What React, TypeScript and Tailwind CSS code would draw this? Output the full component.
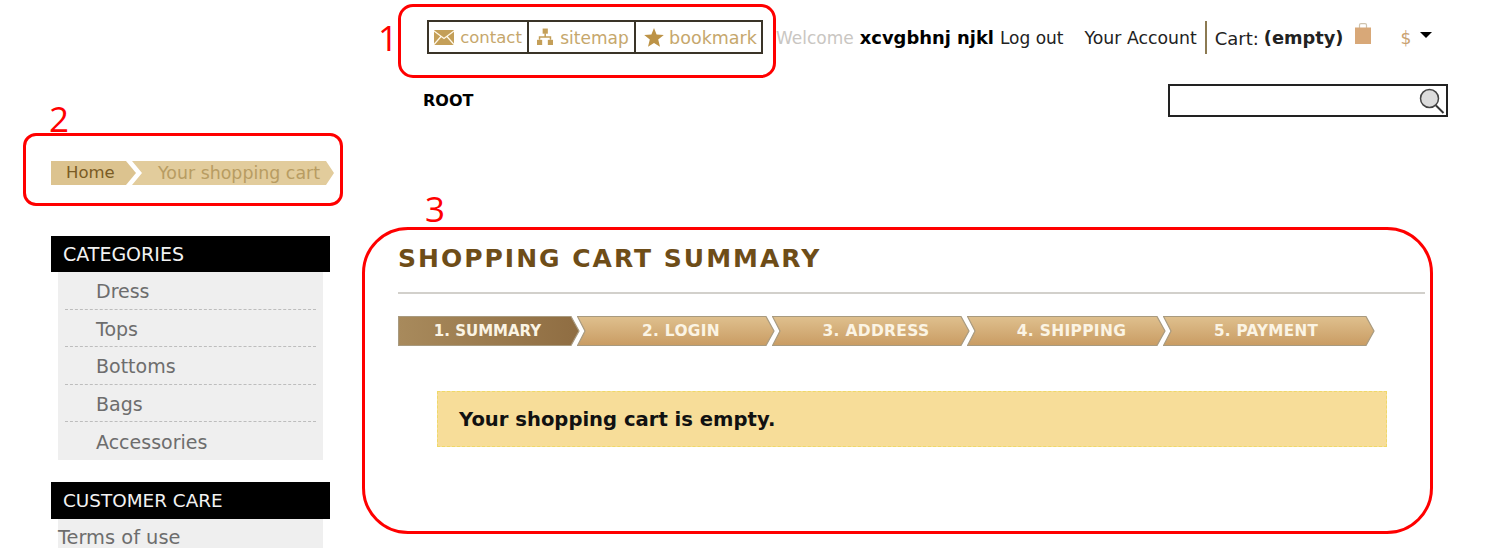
import React from "react";

const font = "font-['DejaVu_Sans','Liberation_Sans',sans-serif]";

function Envelope() {
  return (
    <svg width="20" height="15" viewBox="0 0 20 15" className="shrink-0">
      <rect width="20" height="15" rx="1" fill="#c49f58" />
      <path d="M0 1 L10 8.5 L20 1 M0 14.5 L7 6.5 M20 14.5 L13 6.5" stroke="#fff8e8" strokeWidth="1.3" fill="none" />
    </svg>
  );
}
function Sitemap() {
  return (
    <svg width="16" height="18" viewBox="0 0 17 18" className="shrink-0">
      <g fill="#c49f58">
        <rect x="6" y="0" width="5.5" height="5.5" />
        <rect x="0" y="12" width="5.5" height="5.5" />
        <rect x="11.5" y="12" width="5.5" height="5.5" />
      </g>
      <path d="M8.7 5 V9 M2.7 12 V9 H14.3 V12" stroke="#c49f58" strokeWidth="1.6" fill="none" />
    </svg>
  );
}
function Star() {
  return (
    <svg width="20" height="19" viewBox="0 0 20 19" className="shrink-0">
      <path d="M10 0 L12.6 6.6 L19.8 7.1 L14.2 11.6 L16 18.8 L10 14.9 L4 18.8 L5.8 11.6 L0.2 7.1 L7.4 6.6 Z" fill="#bd9346" />
    </svg>
  );
}
function Bag() {
  return (
    <svg width="18" height="22" viewBox="0 0 18 22">
      <path d="M5.5 5 V2 Q5.5 .7 7 .7 H11 Q12.5 .7 12.5 2 V5" stroke="#cfc3ae" strokeWidth="1.2" fill="none" />
      <rect x="1" y="4.5" width="16" height="16.5" fill="#d8a878" />
    </svg>
  );
}
function Magnifier() {
  return (
    <svg width="28" height="28" viewBox="0 0 28 28" className="shrink-0">
      <circle cx="12.5" cy="11.5" r="9" fill="#dcdcdc" stroke="#444" strokeWidth="1.5" />
      <path d="M19 18.5 L26.5 26" stroke="#333" strokeWidth="2" />
    </svg>
  );
}

function TopButton({ icon, label, w, ml, size, gap }: { icon: React.ReactNode; label: string; w: string; ml?: string; size: string; gap: string }) {
  return (
    <a className={`${w} ${ml ?? ""} ${size} ${gap} flex h-full items-center justify-center border-2 border-[#3a3428] text-[#c6a76c]`}>
      {icon}
      <span className="mt-[2px] leading-[22px]">{label}</span>
    </a>
  );
}

const steps = [
  { label: "1. SUMMARY", w: "w-[182px]", text: "text-[15px] tracking-normal", pad: "pr-[3px]", first: true },
  { label: "2. LOGIN", w: "w-[198px]", text: "text-[15.4px] tracking-[0.3px]", pad: "pl-[10px]" },
  { label: "3. ADDRESS", w: "w-[198px]", text: "text-[15.5px] tracking-[0.3px]", pad: "pl-[10px]" },
  { label: "4. SHIPPING", w: "w-[199px]", text: "text-[15.5px] tracking-[0.3px]", pad: "pl-[10px]" },
  { label: "5. PAYMENT", w: "w-[212px]", text: "text-[15.2px] tracking-[0.3px]", pad: "pr-[6px]" },
];

function Step({ label, w, first, index, text, pad }: { label: string; w: string; first?: boolean; index: number; text: string; pad: string }) {
  const W = { 0: 182, 1: 198, 2: 198, 3: 199, 4: 212 }[index] as number;
  const pts = first
    ? `0.5,0.5 ${W - 9},0.5 ${W - 1},15 ${W - 9},29.5 0.5,29.5`
    : `0.5,0.5 ${W - 9},0.5 ${W - 1},15 ${W - 9},29.5 0.5,29.5 8,15`;
  const gid = first ? "stepDark" : "stepLight";
  return (
    <div className={`${w} ${pad} relative flex h-[30px] shrink-0 items-center justify-center ${index > 0 ? "-ml-[3px]" : ""}`}>
      <svg width={W} height="30" viewBox={`0 0 ${W} 30`} className="absolute inset-0">
        <polygon points={pts} fill={`url(#${gid})`} stroke="#a89a7f" strokeWidth="1.2" />
      </svg>
      <span className={`${text} relative leading-[18px] font-bold text-[#fbf4e4]`}>{label}</span>
    </div>
  );
}

const categories = ["Dress", "Tops", "Bottoms", "Bags", "Accessories"];

export default function App() {
  return (
    <div className={`${font} relative h-[548px] w-[1502px] overflow-hidden bg-white text-black`}>
      <svg width="0" height="0" className="absolute">
        <defs>
          <linearGradient id="stepDark" x1="0" y1="0" x2="1" y2="0">
            <stop offset="0" stopColor="#a88a5c" />
            <stop offset="1" stopColor="#8f6d42" />
          </linearGradient>
          <linearGradient id="stepLight" x1="0" y1="0" x2="0" y2="1">
            <stop offset="0" stopColor="#dfc08e" />
            <stop offset="1" stopColor="#c99c63" />
          </linearGradient>
        </defs>
      </svg>

      {/* Header */}
      <header className="h-[161px] pt-[20px]">
        <div className="flex h-[34px] items-center pl-[427px]">
          <nav className="flex h-full">
            <TopButton icon={<Envelope />} label="contact" w="w-[102px]" size="text-[16.5px]" gap="gap-[6px]" />
            <TopButton icon={<Sitemap />} label="sitemap" w="w-[109px]" ml="-ml-[2px]" size="text-[17px] pl-[3px]" gap="gap-[7px]" />
            <TopButton icon={<Star />} label="bookmark" w="w-[129px]" ml="-ml-[2px]" size="text-[17.5px] pl-[4px]" gap="gap-[5px]" />
          </nav>
          <div className="ml-[13px] flex h-full items-center pt-[3px] text-[17px] text-[#222]">
            <span className="text-[#c9c6c2]">Welcome</span>
            <b className="ml-[6px] text-[17.9px] font-bold text-black">xcvgbhnj njkl</b>
            <span className="ml-[6px]">Log out</span>
            <span className="ml-[21px] text-[17.3px]">Your Account</span>
            <span className="ml-[8px] -mt-[3px] h-[33px] w-[2px] bg-[#8c7a52]" />
            <span className="ml-[8px] text-[18px]">Cart:</span>
            <b className="ml-[5px] text-[17.8px] font-bold">(empty)</b>
            <span className="ml-[10px] -mt-[9px]"><Bag /></span>
            <span className="ml-[29px] text-[#c9a271]">$</span>
            <span className="ml-[9px] -mt-[7px] h-0 w-0 border-x-[6px] border-t-[6px] border-x-transparent border-t-black" />
          </div>
        </div>
        <div className="mt-[30px] flex items-center justify-between pl-[423px] pr-[54px]">
          <span className="text-[16px] font-bold">ROOT</span>
          <div className="flex h-[33px] w-[280px] items-center justify-end border-2 border-[#222] pr-[1px]">
            <Magnifier />
          </div>
        </div>
      </header>

      <div className="flex">
        {/* Sidebar */}
        <aside className="ml-[51px] w-[279px] shrink-0">
          <div className="flex h-[24px] items-center whitespace-nowrap">
            <a className="flex h-full w-[85px] shrink-0 items-center bg-[#dcc38f] pl-[15px] text-[16.5px] text-[#7a5b24] [clip-path:polygon(0_0,calc(100%-10px)_0,100%_50%,calc(100%-10px)_100%,0_100%)]">
              Home
            </a>
            <span className="-ml-[4px] flex h-full w-[202px] shrink-0 items-center bg-[#e2cc9c] pl-[26px] text-[17.4px] text-[#b89c62] [clip-path:polygon(0_0,calc(100%-8px)_0,100%_50%,calc(100%-8px)_100%,0_100%,10px_50%)]">
              Your shopping cart
            </span>
          </div>

          <h2 className="mt-[51px] flex h-[36px] items-center bg-black pl-[12px] pt-[1px] text-[19px] font-normal text-[#f2f2f2]">CATEGORIES</h2>
          <ul className="mx-[7px] bg-[#efefef] px-[7px]">
            {categories.map((c, i) => (
              <li
                key={c}
                className={`flex h-[37.6px] items-center pl-[31px] pt-[2px] text-[19px] text-[#6d6d6d] ${i < categories.length - 1 ? "border-b border-dashed border-[#bdbdbd]" : ""}`}
              >
                {c}
              </li>
            ))}
          </ul>

          <h2 className="mt-[22px] flex h-[37px] items-center bg-black pl-[12px] pt-[1px] text-[18.4px] font-normal text-[#f2f2f2]">CUSTOMER CARE</h2>
          <div className="mx-[7px] flex h-[36px] items-center bg-[#efefef] pt-[2px] text-[19.4px] text-[#6d6d6d]">Terms of use</div>
        </aside>

        {/* Main */}
        <main className="ml-[68px] w-[1027px] pt-[83px]">
          <h1 className="text-[25px] leading-[30px] font-bold tracking-[2px] text-[#6e4d18]">SHOPPING CART SUMMARY</h1>
          <div className="mt-[18px] h-[2px] bg-[#d2d0cb]" />
          <div className="mt-[22px] flex">
            {steps.map((s, i) => (
              <Step key={s.label} label={s.label} w={s.w} first={s.first} index={i} text={s.text} pad={s.pad} />
            ))}
          </div>
          <div className="mt-[45px] ml-[39px] flex h-[56px] w-[950px] items-center border border-dashed border-[#efd968] bg-[#f7dd99] pl-[21px] pt-[2px] text-[19.6px] font-bold text-[#111]">
            Your shopping cart is empty.
          </div>
        </main>
      </div>

      {/* Annotations laid over the screenshot */}
      <div className="pointer-events-none absolute left-[398px] top-[4px] h-[74px] w-[378px] rounded-[15px] border-[3px] border-[#ff0000]" />
      <div className="pointer-events-none absolute left-[23px] top-[133px] h-[73px] w-[320px] rounded-[13px] border-[3px] border-[#ff0000]" />
      <div className="pointer-events-none absolute left-[362px] top-[227px] h-[307px] w-[1071px] rounded-[46px] border-[3px] border-[#ff0000]" />
      <span className="absolute left-[378px] top-[16px] font-['Open_Sans',sans-serif] text-[35px] leading-[44px] font-medium text-[#ff0000]">1</span>
      <span className="absolute left-[49px] top-[97px] font-['Open_Sans',sans-serif] text-[35px] leading-[44px] font-medium text-[#ff0000]">2</span>
      <span className="absolute left-[425px] top-[187px] font-['Open_Sans',sans-serif] text-[35px] leading-[44px] font-medium text-[#ff0000]">3</span>
    </div>
  );
}
